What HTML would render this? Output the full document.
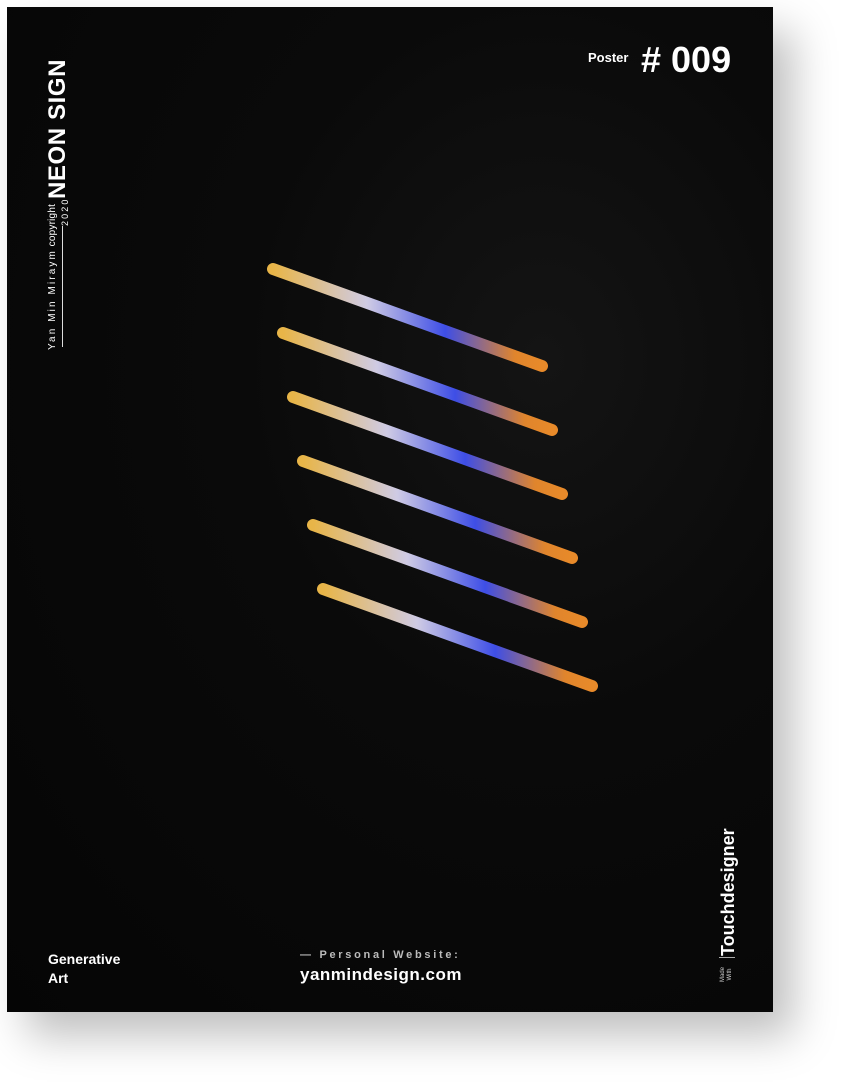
<!DOCTYPE html>
<html><head><meta charset="utf-8"><style>
body{margin:0;width:842px;height:1083px;background:#fff;position:relative;overflow:hidden;font-family:"Liberation Sans",sans-serif}
.poster{position:absolute;left:7px;top:7px;width:766px;height:1005px;background:radial-gradient(ellipse at 70% 35%,#141414 0%,#0a0a0a 40%,#050505 100%);box-shadow:20px 24px 40px rgba(0,0,0,0.25)}
.a{position:absolute;color:#fff;white-space:nowrap}
.r{position:absolute;color:#fff;white-space:nowrap;transform:rotate(-90deg);transform-origin:0 0}
</style></head><body>
<div class="poster"></div>
<svg style="position:absolute;left:0;top:0" width="842" height="1083">
<defs><linearGradient id="g" x1="0" y1="0" x2="1" y2="0">
<stop offset="0" stop-color="#e8b548"/><stop offset="0.35" stop-color="#cfcbe4"/><stop offset="0.64" stop-color="#3e4ee6"/><stop offset="0.9" stop-color="#e0852c"/><stop offset="1" stop-color="#e88a2a"/></linearGradient></defs>
<g stroke="url(#g)" stroke-width="12" stroke-linecap="round" fill="none">
<path d="M273 269 L542 366"/>
<path d="M283 333 L552 430"/>
<path d="M293 397 L562 494"/>
<path d="M303 461 L572 558"/>
<path d="M313 525 L582 622"/>
<path d="M323 589 L592 686"/>
</g></svg>
<div class="r" style="left:45px;top:199px;font-size:24px;font-weight:bold;letter-spacing:0.6px;line-height:26px">NEON SIGN</div>
<div class="r" style="left:47px;top:350px;font-size:10px;line-height:11px"><span style="letter-spacing:2.1px">Yan Min Miraym</span> <span style="letter-spacing:0.2px">copyright</span></div>
<div class="r" style="left:60px;top:226px;font-size:9px;letter-spacing:2.1px;line-height:10px">2020</div>
<div class="a" style="left:62px;top:226px;width:1px;height:121px;background:#ddd"></div>
<div class="a" style="left:588px;top:50px;font-size:13px;font-weight:bold">Poster</div>
<div class="a" style="left:641px;top:39px;font-size:36px;font-weight:bold;letter-spacing:0px">#&nbsp;009</div>
<div class="a" style="left:48px;top:950px;font-size:14px;font-weight:bold;line-height:19px">Generative<br>Art</div>
<div class="a" style="left:300px;top:949px;font-size:11px;font-weight:bold;letter-spacing:2.7px;color:#bbb">— Personal Website:</div>
<div class="a" style="left:300px;top:965px;font-size:17px;font-weight:bold;letter-spacing:0.5px">yanmindesign.com</div>
<div class="r" style="left:718px;top:956px;font-size:18px;font-weight:bold;line-height:20px">Touchdesigner</div>
<div class="a" style="left:719px;top:957px;width:16px;height:1px;background:#aaa"></div>
<div class="r" style="left:720px;top:982px;font-size:6px;line-height:7px;color:#ccc;text-align:center">Made<br>With</div>
</body></html>
